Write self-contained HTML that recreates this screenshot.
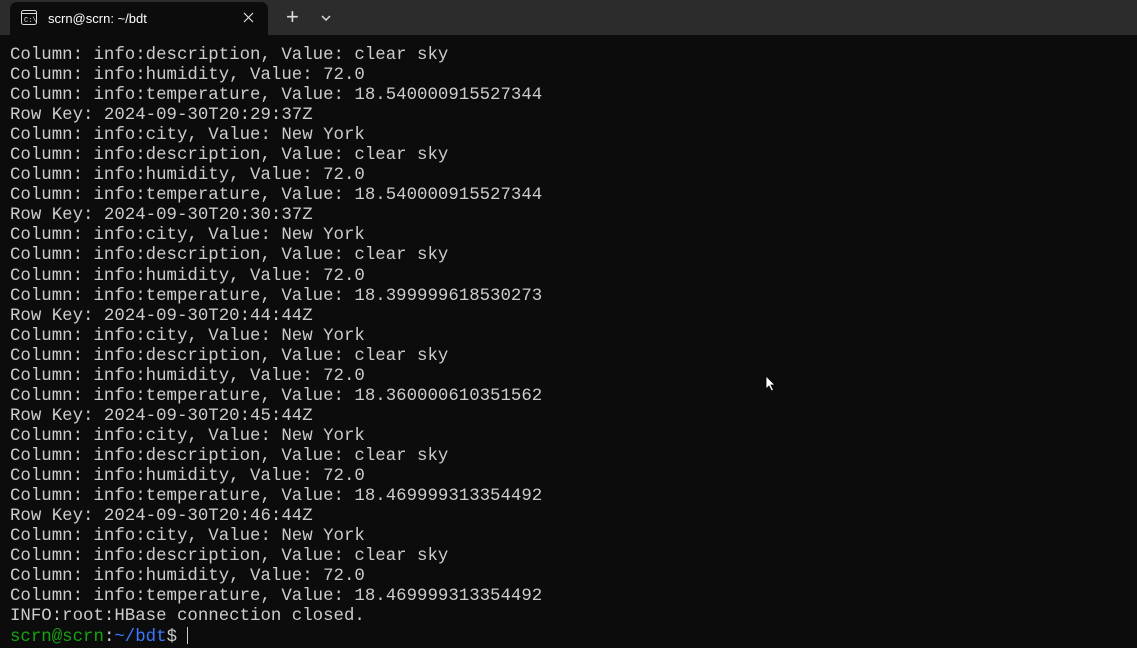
<!DOCTYPE html>
<html><head><style>
body{margin:0;width:1137px;height:645px;background:#0c0c0c;overflow:hidden;position:relative;font-family:"Liberation Sans",sans-serif}
.bar{position:absolute;left:0;top:0;width:1137px;height:35px;background:#2c2c2c}
.tab{position:absolute;left:10px;top:2px;width:258px;height:33px;background:#0c0c0c;border-radius:7px 7px 0 0}
.title{position:absolute;left:38px;top:9px;color:#fff;font-size:13px}
.plus{position:absolute;left:286px;top:4px;color:#ddd;font-size:22px;font-weight:300}
.chev{position:absolute;left:320px;top:14px}
pre{position:absolute;left:10px;top:46px;margin:0;font-family:"Liberation Mono",monospace;font-size:17.4px;line-height:20.05px;color:#cccccc}
.g{color:#16a30f}.b{color:#3b78ff}
</style></head><body>
<div class="bar"><div class="tab">
<svg style="position:absolute;left:11px;top:8px" width="16" height="15" viewBox="0 0 16 15"><rect x="0.5" y="0.5" width="15" height="14" rx="2" fill="none" stroke="#ddd"/><line x1="1" y1="3.5" x2="15" y2="3.5" stroke="#ddd"/><text x="3" y="12" font-size="7" fill="#ddd" font-family="Liberation Mono">C:\</text></svg>
<div class="title">scrn@scrn: ~/bdt</div>
<svg style="position:absolute;left:233px;top:10px" width="11" height="11" viewBox="0 0 11 11"><path d="M1 1 L10 10 M10 1 L1 10" stroke="#ddd" stroke-width="1.2"/></svg>
</div>
<div class="plus">+</div>
<svg class="chev" width="12" height="8" viewBox="0 0 12 8"><path d="M2 2 L6 6 L10 2" stroke="#ddd" stroke-width="1.5" fill="none"/></svg>
</div>
<pre>Column: info:description, Value: clear sky
Column: info:humidity, Value: 72.0
Column: info:temperature, Value: 18.540000915527344
Row Key: 2024-09-30T20:29:37Z
Column: info:city, Value: New York
Column: info:description, Value: clear sky
Column: info:humidity, Value: 72.0
Column: info:temperature, Value: 18.540000915527344
Row Key: 2024-09-30T20:30:37Z
Column: info:city, Value: New York
Column: info:description, Value: clear sky
Column: info:humidity, Value: 72.0
Column: info:temperature, Value: 18.399999618530273
Row Key: 2024-09-30T20:44:44Z
Column: info:city, Value: New York
Column: info:description, Value: clear sky
Column: info:humidity, Value: 72.0
Column: info:temperature, Value: 18.360000610351562
Row Key: 2024-09-30T20:45:44Z
Column: info:city, Value: New York
Column: info:description, Value: clear sky
Column: info:humidity, Value: 72.0
Column: info:temperature, Value: 18.469999313354492
Row Key: 2024-09-30T20:46:44Z
Column: info:city, Value: New York
Column: info:description, Value: clear sky
Column: info:humidity, Value: 72.0
Column: info:temperature, Value: 18.469999313354492
INFO:root:HBase connection closed.
<span class="g">scrn@scrn</span>:<span class="b">~/bdt</span>$ <span style="display:inline-block;width:1px;height:17px;background:#ccc;vertical-align:-3px"></span></pre>
<svg style="position:absolute;left:765px;top:375px" width="11" height="17" viewBox="0 0 11 17"><path d="M1 1 L1 14 L4 11 L6.5 16 L8.5 15 L6 10 L10 10 Z" fill="#fff" stroke="#000" stroke-width="0.8"/></svg>
</body></html>
